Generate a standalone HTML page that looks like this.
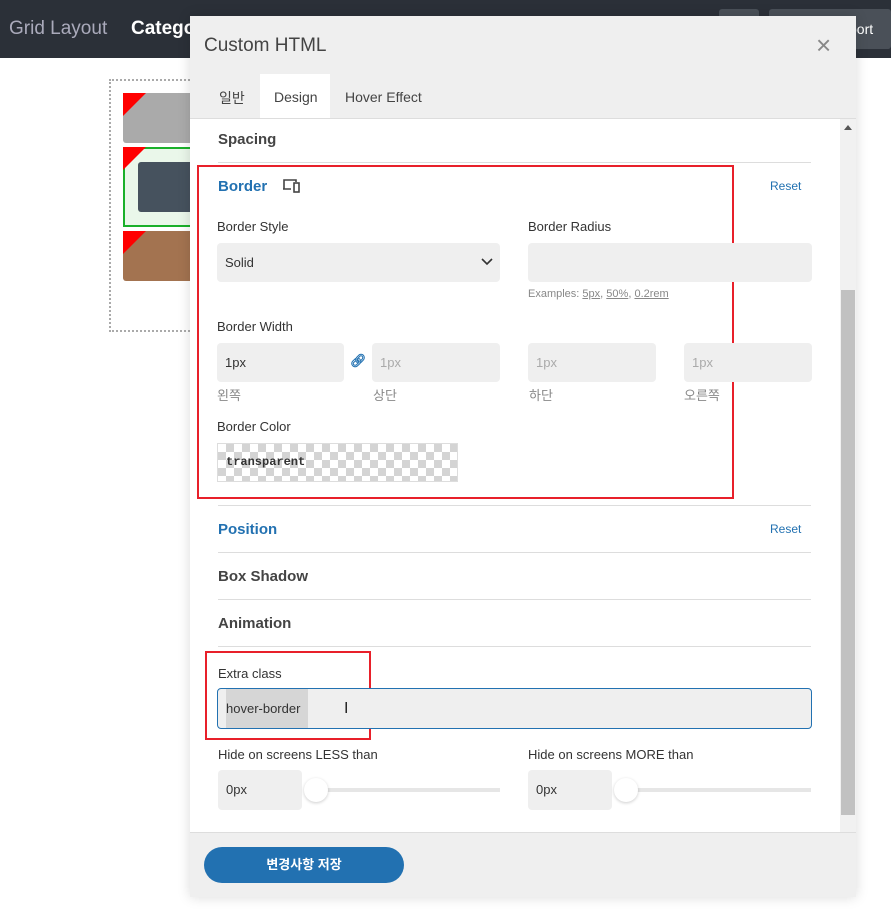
<!DOCTYPE html>
<html><head><meta charset="utf-8"><style>
*{box-sizing:border-box;margin:0;padding:0}
body{width:891px;height:912px;position:relative;overflow:hidden;background:#fff;font-family:"Liberation Sans","Noto Sans CJK KR",sans-serif;color:#333}
.a{position:absolute}
.lbl{font-size:13px;color:#333;font-weight:500}
.inp{background:#efefef;border-radius:4px}
.sec{font-size:15px;font-weight:bold;color:#444}
.hr{height:1px;background:#ddd;left:218px;width:593px}
.ph{font-size:13px;color:#aaa}
.ko{font-size:13px;color:#888}
</style></head><body>
<div class="a" style="left:0;top:0;width:891px;height:58px;background:#2b3038"></div>
<div class="a" style="left:9px;top:18px;font-size:19px;color:#aab">Grid Layout</div>
<div class="a" style="left:131px;top:18px;font-size:19px;color:#fff;font-weight:bold">Category</div>
<div class="a" style="left:719px;top:9px;width:40px;height:40px;background:#4a5058;border-radius:3px"></div>
<div class="a" style="left:769px;top:9px;width:122px;height:40px;background:#4a5058;border-radius:3px;color:#fff;font-size:14px;padding:12px 0 0 80px">port</div>
<div class="a" style="left:109px;top:79px;width:100px;height:253px;border:2px dotted #aaa"></div>
<div class="a" style="left:123px;top:93px;width:80px;height:50px;background:#aaa;border-radius:3px"></div>
<div class="a" style="left:123px;top:147px;width:80px;height:80px;background:#eaf7ea;border:2px solid #1ab02a"></div>
<div class="a" style="left:138px;top:162px;width:60px;height:50px;background:#46525e;border-radius:3px"></div>
<div class="a" style="left:123px;top:231px;width:80px;height:50px;background:#a37350;border-radius:3px"></div>
<svg class="a" style="left:123px;top:93px" width="25" height="190"><polygon points="0,0 23,0 0,23" fill="red"/><polygon points="0,54 23,54 0,77" fill="red"/><polygon points="0,138 23,138 0,161" fill="red"/></svg>
<div class="a" style="left:190px;top:16px;width:666px;height:881px;background:#efefef;box-shadow:0 0 12px rgba(0,0,0,.15)"></div>
<div class="a" style="left:204px;top:35px;font-size:19px;color:#444">Custom HTML</div>
<div class="a" style="left:816px;top:30px;font-size:26px;color:#888">×</div>
<div class="a" style="left:219px;top:88px;font-size:14px;color:#444">일반</div>
<div class="a" style="left:260px;top:74px;width:70px;height:45px;background:#fff"></div>
<div class="a" style="left:274px;top:89px;font-size:14px;color:#444">Design</div>
<div class="a" style="left:345px;top:89px;font-size:14px;color:#444">Hover Effect</div>
<div class="a" style="left:190px;top:118px;width:666px;height:1px;background:#ddd"></div>
<div class="a" style="left:190px;top:119px;width:650px;height:713px;background:#fff"></div>
<div class="a" style="left:840px;top:119px;width:16px;height:713px;background:#f1f1f1"></div>
<div class="a" style="left:841px;top:290px;width:14px;height:525px;background:#c1c1c1"></div>
<div class="a" style="left:844px;top:125px;width:0;height:0;border:4px solid transparent;border-bottom:5px solid #555;border-top:0"></div>
<div class="a sec" style="left:218px;top:131px">Spacing</div>
<div class="a hr" style="top:162px"></div>
<div class="a" style="left:197px;top:165px;width:537px;height:334px;border:2px solid #e8202a"></div>
<div class="a sec" style="left:218px;top:178px;color:#2271b1">Border</div>
<svg class="a" style="left:282px;top:178px" width="20" height="16" fill="none" stroke="#444" stroke-width="1.6"><path d="M2 11V2h12v2M1 11h8"/><rect x="12" y="5" width="5" height="9"/></svg>
<div class="a" style="left:770px;top:179px;font-size:12px;color:#2271b1">Reset</div>
<div class="a lbl" style="left:217px;top:219px">Border Style</div>
<div class="a inp" style="left:217px;top:243px;width:283px;height:39px;font-size:13px;padding:12px 8px">Solid</div>
<svg class="a" style="left:481px;top:258px" width="12" height="8" fill="none" stroke="#333" stroke-width="1.6"><path d="M1 1l5 5 5-5"/></svg>
<div class="a lbl" style="left:528px;top:219px">Border Radius</div>
<div class="a inp" style="left:528px;top:243px;width:284px;height:39px"></div>
<div class="a" style="left:528px;top:288px;font-size:11px;color:#888">Examples: <u>5px</u>, <u>50%</u>, <u>0.2rem</u></div>
<div class="a lbl" style="left:217px;top:319px">Border Width</div>
<div class="a inp" style="left:217px;top:343px;width:127px;height:39px;font-size:13px;padding:12px 8px">1px</div>
<div class="a" style="left:350px;top:353px;font-size:13px;color:#2271b1;font-weight:bold">🔗︎</div>
<div class="a inp ph" style="left:372px;top:343px;width:128px;height:39px;padding:12px 8px">1px</div>
<div class="a inp ph" style="left:528px;top:343px;width:128px;height:39px;padding:12px 8px">1px</div>
<div class="a inp ph" style="left:684px;top:343px;width:128px;height:39px;padding:12px 8px">1px</div>
<div class="a ko" style="left:217px;top:385px">왼쪽</div>
<div class="a ko" style="left:373px;top:385px">상단</div>
<div class="a ko" style="left:529px;top:385px">하단</div>
<div class="a ko" style="left:684px;top:385px">오른쪽</div>
<div class="a lbl" style="left:217px;top:419px">Border Color</div>
<div class="a" style="left:217px;top:443px;width:241px;height:39px;border:1px solid #ddd;background-color:#fff;background-image:linear-gradient(45deg,#d4d4d4 25%,transparent 25%,transparent 75%,#d4d4d4 75%),linear-gradient(45deg,#d4d4d4 25%,transparent 25%,transparent 75%,#d4d4d4 75%);background-size:16px 16px;background-position:0 0,8px 8px;font-family:'Liberation Mono',monospace;font-size:12px;font-weight:bold;padding:11px 8px">transparent</div>
<div class="a hr" style="top:505px"></div>
<div class="a sec" style="left:218px;top:521px;color:#2271b1">Position</div>
<div class="a" style="left:770px;top:522px;font-size:12px;color:#2271b1">Reset</div>
<div class="a hr" style="top:552px"></div>
<div class="a sec" style="left:218px;top:568px">Box Shadow</div>
<div class="a hr" style="top:599px"></div>
<div class="a sec" style="left:218px;top:615px">Animation</div>
<div class="a hr" style="top:646px"></div>
<div class="a" style="left:205px;top:651px;width:166px;height:89px;border:2px solid #e8202a"></div>
<div class="a lbl" style="left:218px;top:666px">Extra class</div>
<div class="a" style="left:217px;top:688px;width:595px;height:41px;background:#efefef;border:1px solid #2271b1;border-radius:4px"></div>
<div class="a" style="left:226px;top:689px;width:82px;height:39px;background:#d6d6d6"></div>
<div class="a" style="left:226px;top:701px;font-size:13px">hover-border</div>
<div class="a" style="left:344px;top:700px;font-size:16px;color:#222">I</div>
<div class="a lbl" style="left:218px;top:747px">Hide on screens LESS than</div>
<div class="a lbl" style="left:528px;top:747px">Hide on screens MORE than</div>
<div class="a inp" style="left:218px;top:770px;width:84px;height:40px;font-size:13px;padding:12px 8px">0px</div>
<div class="a inp" style="left:528px;top:770px;width:84px;height:40px;font-size:13px;padding:12px 8px">0px</div>
<div class="a" style="left:306px;top:788px;width:194px;height:4px;background:#e6e6e6"></div>
<div class="a" style="left:616px;top:788px;width:195px;height:4px;background:#e6e6e6"></div>
<div class="a" style="left:304px;top:778px;width:24px;height:24px;border-radius:50%;background:#fff;box-shadow:0 1px 3px rgba(0,0,0,.2)"></div>
<div class="a" style="left:614px;top:778px;width:24px;height:24px;border-radius:50%;background:#fff;box-shadow:0 1px 3px rgba(0,0,0,.2)"></div>
<div class="a" style="left:190px;top:832px;width:666px;height:1px;background:#ddd"></div>
<div class="a" style="left:204px;top:847px;width:200px;height:36px;background:#2271b1;border-radius:18px;color:#fff;font-size:13px;font-weight:bold;text-align:center;line-height:36px">변경사항 저장</div>
</body></html>
